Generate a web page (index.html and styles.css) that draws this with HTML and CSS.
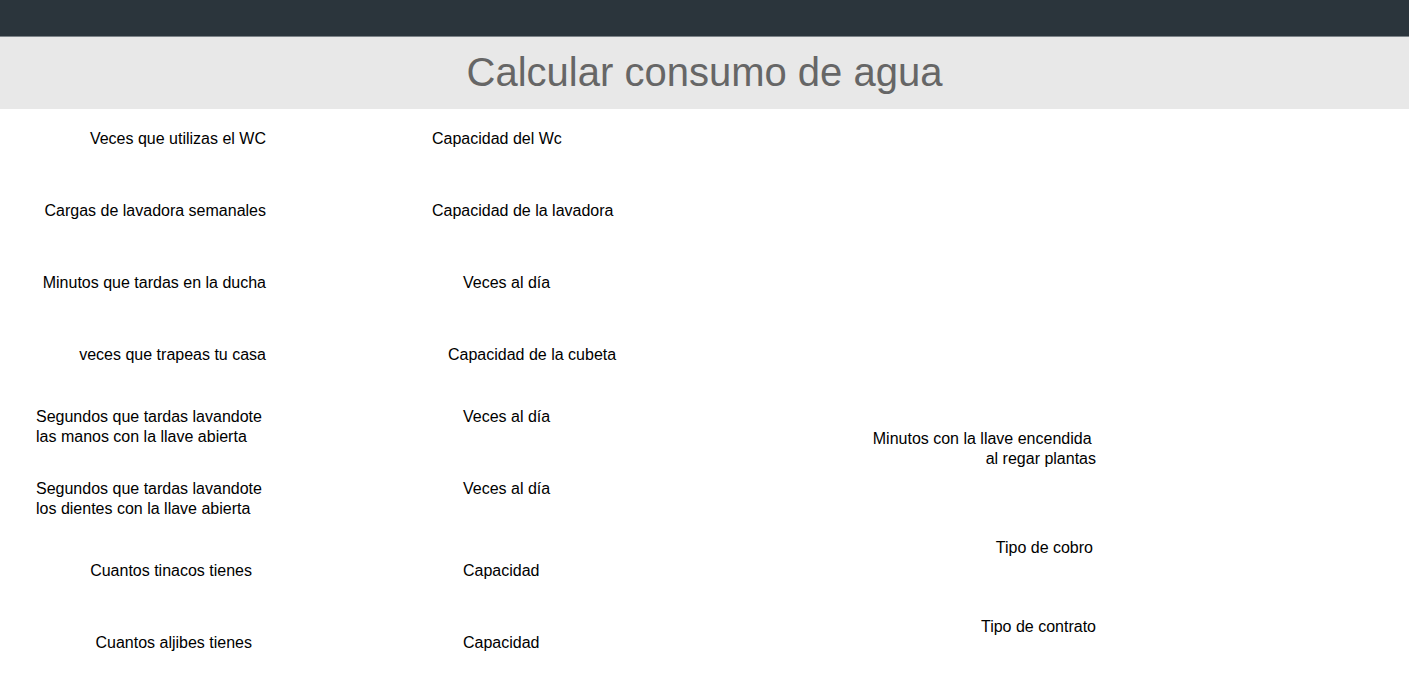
FILE: index.html
```html
<!DOCTYPE html>
<html lang="es">
<head>
<meta charset="utf-8">
<title>Calcular consumo de agua</title>
<link rel="stylesheet" href="styles.css">
</head>
<body>
<div class="topbar"></div>
<header class="banner"><h1 class="title">Calcular consumo de agua</h1></header>
<main class="content">
  <section class="form">
    <div class="row"><div class="pair">
      <span class="lab-left">Veces que utilizas el WC</span>
      <span class="lab-mid">Capacidad del Wc</span>
    </div></div>
    <div class="row"><div class="pair">
      <span class="lab-left">Cargas de lavadora semanales</span>
      <span class="lab-mid">Capacidad de la lavadora</span>
    </div></div>
    <div class="row"><div class="pair">
      <span class="lab-left">Minutos que tardas en la ducha</span>
      <span class="lab-mid indent-l">Veces al día</span>
    </div></div>
    <div class="row"><div class="pair">
      <span class="lab-left">veces que trapeas tu casa</span>
      <span class="lab-mid indent-m">Capacidad de la cubeta</span>
    </div></div>
    <div class="row"><div class="pair">
      <span class="lab-left multi">Segundos que tardas lavandote<br>las manos con la llave abierta</span>
      <span class="lab-mid indent-l">Veces al día</span>
    </div></div>
    <div class="row"><div class="pair">
      <span class="lab-left multi">Segundos que tardas lavandote<br>los dientes con la llave abierta</span>
      <span class="lab-mid indent-l">Veces al día</span>
    </div></div>
    <div class="row"><div class="pair">
      <span class="lab-left short">Cuantos tinacos tienes</span>
      <span class="lab-mid indent-l">Capacidad</span>
    </div></div>
    <div class="row"><div class="pair">
      <span class="lab-left short">Cuantos aljibes tienes</span>
      <span class="lab-mid indent-l">Capacidad</span>
    </div></div>
  </section>
  <aside class="side">
    <span class="side-item plants">Minutos con la llave encendida&nbsp;<br>al regar plantas</span>
    <span class="side-item cobro">Tipo de cobro</span>
    <span class="side-item contrato">Tipo de contrato</span>
  </aside>
</main>
</body>
</html>
```

FILE: styles.css
```css
html, body {
  margin: 0;
  padding: 0;
  background: #ffffff;
}

body {
  font-family: "Liberation Sans", Arial, sans-serif;
  font-size: 16px;
  line-height: 20px;
  color: #000000;
}

.topbar {
  height: 36px;
  background: #2b353c;
  border-bottom: 1px solid #7c8388;
}

.banner {
  height: 72px;
  background: #e8e8e8;
  display: flex;
  align-items: center;
  justify-content: center;
}

.title {
  margin: 0;
  font-weight: normal;
  font-size: 40px;
  line-height: 46px;
  color: #666666;
  padding-bottom: 2px;
}

.content {
  display: flex;
  margin-top: -6px;
}

.form {
  width: 700px;
  display: flex;
  flex-direction: column;
}

.row {
  height: 72px;
  display: flex;
  align-items: center;
}

.pair {
  display: grid;
  grid-template-columns: 266px auto;
  column-gap: 166px;
  align-items: baseline;
}

.lab-left {
  text-align: right;
}

.lab-left.multi {
  text-align: left;
  padding-left: 36px;
}

.lab-left.short {
  padding-right: 14px;
}

.indent-l {
  padding-left: 31px;
}

.indent-m {
  padding-left: 16px;
}

.side {
  width: 396px;
  display: flex;
  flex-direction: column;
  align-items: flex-end;
  text-align: right;
  padding-top: 326px;
}

.cobro {
  margin-top: 69px;
  padding-right: 3px;
}

.contrato {
  margin-top: 59px;
}
```
